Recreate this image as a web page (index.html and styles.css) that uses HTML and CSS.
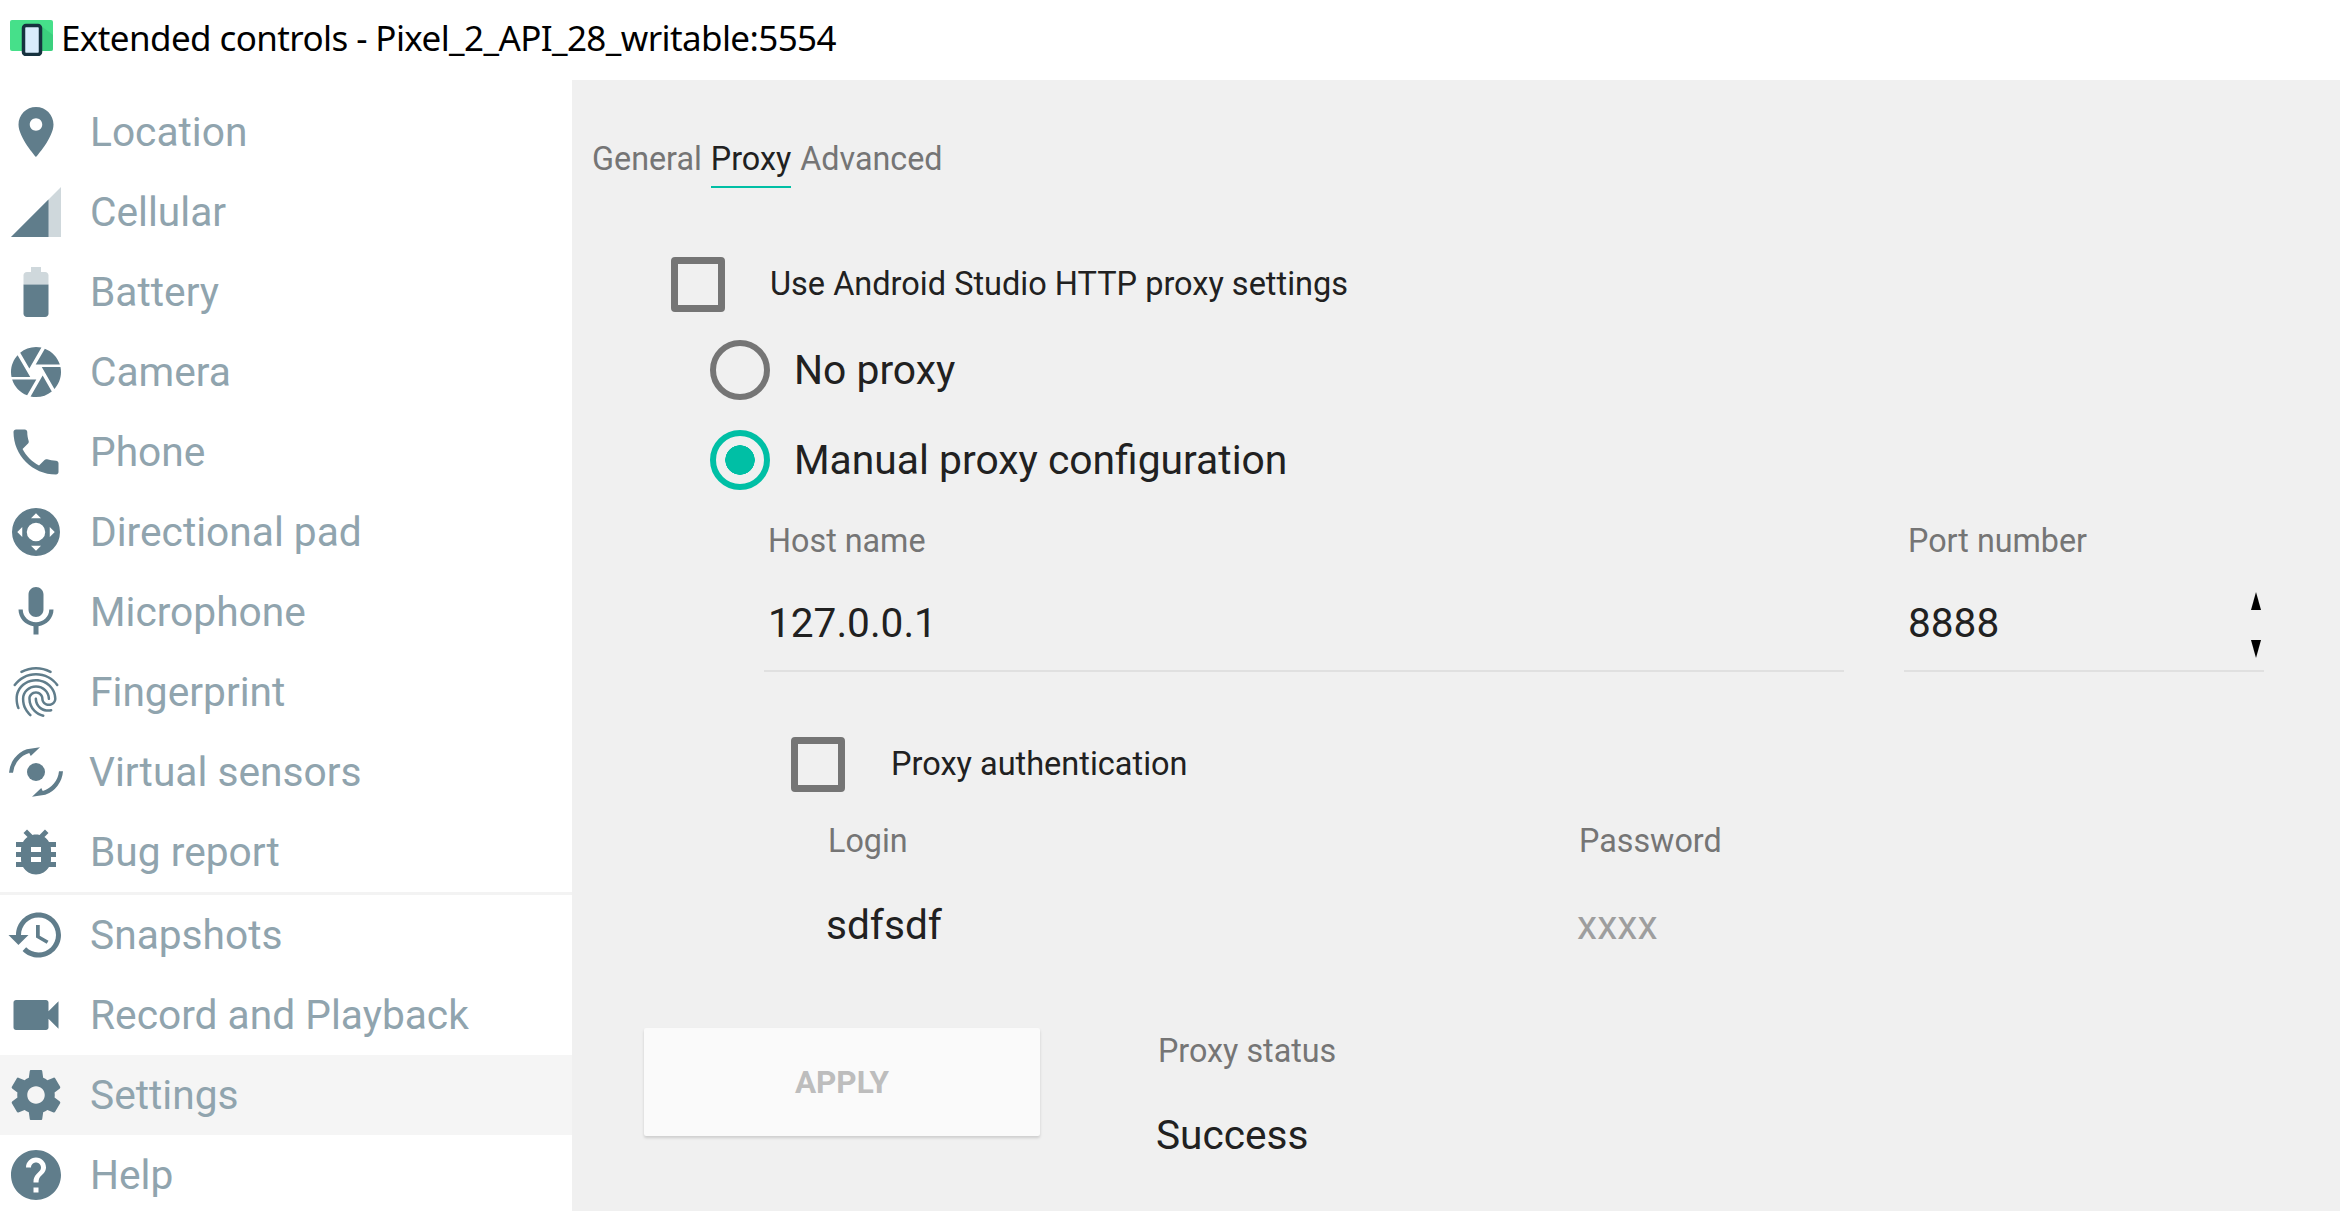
FILE: index.html
```html
<!DOCTYPE html>
<html lang="en">
<head>
    <meta charset="UTF-8">
    <title>Extended controls - Pixel_2_API_28_writable:5554</title>
    <link rel="stylesheet" href="styles.css">
</head>
<body>
    <div class="titlebar">
        <svg class="app-icon" viewBox="0 0 44 36">
            <rect x="0" y="0" width="43" height="31" rx="2" fill="#46e08a"/>
            <path d="M30 5 L43 15 V29 a2 2 0 0 1 -2 2 H30z" fill="#33c274" opacity=".55"/>
            <rect x="13.500" y="5.500" width="17" height="29" rx="2.500" fill="#d9ecfc" stroke="#16323f" stroke-width="3.500"/>
        </svg>
        <span class="title-text">Extended controls - Pixel_2_API_28_writable:5554</span>
    </div>

    <div class="window">
        <div class="sidebar">
            <div class="nav-group">
                <div class="nav-item">
                    <svg class="nav-icon" viewBox="0 0 24 24"><path d="M12 2C8.13 2 5 5.13 5 9c0 5.25 7 13 7 13s7-7.75 7-13c0-3.87-3.13-7-7-7zm0 9.5c-1.38 0-2.5-1.12-2.5-2.5s1.12-2.5 2.5-2.5 2.5 1.12 2.5 2.5-1.12 2.5-2.5 2.5z"/></svg>
                    <span>Location</span>
                </div>
                <div class="nav-item">
                    <svg class="nav-icon" viewBox="0 0 24 24"><path fill-opacity=".3" d="M2 22h20V2z"/><path d="M17 7L2 22h15z"/></svg>
                    <span>Cellular</span>
                </div>
                <div class="nav-item">
                    <svg class="nav-icon" viewBox="0 0 24 24"><path fill-opacity=".3" d="M17 5.33C17 4.6 16.4 4 15.67 4H14V2h-4v2H8.33C7.6 4 7 4.6 7 5.33V9h10V5.33z"/><path d="M7 9v11.67C7 21.4 7.6 22 8.33 22h7.33c.74 0 1.34-.6 1.34-1.33V9H7z"/></svg>
                    <span>Battery</span>
                </div>
                <div class="nav-item">
                    <svg class="nav-icon" viewBox="0 0 24 24"><path d="M9.4 10.5l4.77-8.26C13.47 2.09 12.75 2 12 2c-2.4 0-4.6.85-6.32 2.25l3.66 6.35.06-.1zM21.54 9c-.92-2.92-3.15-5.26-6-6.34L11.88 9h9.66zm.26 1h-7.49l.29.5 4.76 8.25C21 16.97 22 14.61 22 12c0-.69-.07-1.35-.2-2zM8.54 12l-3.9-6.75C3.01 7.03 2 9.39 2 12c0 .69.07 1.35.2 2h7.49l-1.15-2zm-6.08 3c.92 2.92 3.15 5.26 6 6.34L12.12 15H2.46zm11.27 0l-3.9 6.76c.7.15 1.42.24 2.17.24 2.4 0 4.6-.85 6.32-2.25l-3.66-6.35-.93 1.6z"/></svg>
                    <span>Camera</span>
                </div>
                <div class="nav-item">
                    <svg class="nav-icon" viewBox="0 0 24 24"><path d="M6.62 10.79c1.44 2.83 3.76 5.14 6.59 6.59l2.2-2.2c.27-.27.67-.36 1.02-.24 1.12.37 2.33.57 3.57.57.55 0 1 .45 1 1V20c0 .55-.45 1-1 1-9.39 0-17-7.61-17-17 0-.55.45-1 1-1h3.5c.55 0 1 .45 1 1 0 1.25.2 2.45.57 3.57.11.35.03.74-.25 1.02l-2.2 2.2z"/></svg>
                    <span>Phone</span>
                </div>
                <div class="nav-item">
                    <svg class="nav-icon" viewBox="0 0 24 24"><path fill-rule="evenodd" d="M12 2.400a9.600 9.600 0 1 0 0 19.200 9.600 9.600 0 0 0 0-19.200zM12 8.300a3.700 3.700 0 1 1 0 7.400 3.700 3.700 0 0 1 0-7.400zM12 4.500l2 2h-4zM12 19.500l-2-2h4zM4.500 12l2-2v4zM19.500 12l-2 2v-4z"/></svg>
                    <span>Directional pad</span>
                </div>
                <div class="nav-item">
                    <svg class="nav-icon" viewBox="0 0 24 24"><path d="M12 14c1.66 0 2.99-1.34 2.99-3L15 5c0-1.66-1.34-3-3-3S9 3.34 9 5v6c0 1.66 1.34 3 3 3zm5.3-3c0 3-2.54 5.1-5.3 5.1S6.7 14 6.7 11H5c0 3.41 2.72 6.23 6 6.72V21h2v-3.28c3.28-.48 6-3.3 6-6.72h-1.7z"/></svg>
                    <span>Microphone</span>
                </div>
                <div class="nav-item">
                    <svg class="nav-icon" viewBox="0 0 24 24"><path d="M17.81 4.47c-.08 0-.16-.02-.23-.06C15.66 3.42 14 3 12.01 3c-1.98 0-3.86.47-5.57 1.41-.24.13-.54.04-.68-.2-.13-.24-.04-.55.2-.68C7.82 2.52 9.86 2 12.01 2c2.13 0 3.99.47 6.03 1.52.25.13.34.43.21.67-.09.18-.26.28-.44.28zM3.5 9.72c-.1 0-.2-.03-.29-.09-.23-.16-.28-.47-.12-.7.99-1.4 2.25-2.5 3.75-3.27C9.98 4.04 14 4.03 17.15 5.65c1.5.77 2.76 1.86 3.75 3.25.16.22.11.54-.12.7-.23.16-.54.11-.7-.12-.9-1.26-2.04-2.25-3.39-2.94-2.87-1.47-6.54-1.47-9.4.01-1.36.7-2.5 1.7-3.4 2.96-.08.14-.23.21-.39.21zm6.25 12.07c-.13 0-.26-.05-.35-.15-.87-.87-1.34-1.43-2.01-2.64-.69-1.23-1.05-2.73-1.05-4.34 0-2.97 2.54-5.39 5.66-5.39s5.66 2.42 5.66 5.39c0 .28-.22.5-.5.5s-.5-.22-.5-.5c0-2.42-2.09-4.39-4.66-4.39-2.57 0-4.66 1.97-4.66 4.39 0 1.44.32 2.77.93 3.85.64 1.15 1.08 1.64 1.85 2.42.19.2.19.51 0 .71-.11.1-.24.15-.37.15zm7.17-1.85c-1.19 0-2.24-.3-3.1-.89-1.49-1.01-2.38-2.65-2.38-4.39 0-.28.22-.5.5-.5s.5.22.5.5c0 1.41.72 2.74 1.94 3.56.71.48 1.54.71 2.54.71.24 0 .64-.03 1.04-.1.27-.05.53.13.58.41.05.27-.13.53-.41.58-.57.11-1.07.12-1.21.12zM14.91 22c-.04 0-.09-.01-.13-.02-1.59-.44-2.63-1.03-3.72-2.1-1.4-1.39-2.17-3.24-2.17-5.22 0-1.62 1.38-2.94 3.08-2.94 1.7 0 3.08 1.32 3.08 2.94 0 1.07.93 1.94 2.08 1.94s2.08-.87 2.08-1.94c0-3.77-3.25-6.83-7.25-6.83-2.84 0-5.44 1.58-6.61 4.03-.39.81-.59 1.76-.59 2.8 0 .78.07 2.01.67 3.61.1.26-.03.55-.29.64-.26.1-.55-.04-.64-.29-.49-1.31-.73-2.61-.73-3.96 0-1.2.23-2.29.68-3.24 1.33-2.79 4.28-4.6 7.51-4.6 4.55 0 8.25 3.51 8.25 7.83 0 1.62-1.38 2.94-3.08 2.94s-3.08-1.32-3.08-2.94c0-1.07-.93-1.94-2.08-1.94s-2.08.87-2.08 1.94c0 1.71.66 3.31 1.87 4.51.95.94 1.86 1.46 3.27 1.85.27.07.42.35.35.61-.05.23-.26.38-.47.38z"/></svg>
                    <span>Fingerprint</span>
                </div>
                <div class="nav-item">
                    <svg class="nav-icon" viewBox="0 0 24 24">
                        <circle cx="12" cy="12" r="3.600"/>
                        <path id="sensor-arc" d="M1.200 12.300A10.800 10.800 0 0 1 8.300 2.900L13.600 2.100 9.900 5.600 9.300 4.400A9.200 9.200 0 0 0 2.800 12.300z"/>
                        <use href="#sensor-arc" transform="rotate(180 12 12)"/>
                    </svg>
                    <span class="nudge">Virtual sensors</span>
                </div>
                <div class="nav-item">
                    <svg class="nav-icon" viewBox="0 0 24 24"><path d="M20 8h-2.81c-.45-.78-1.07-1.45-1.82-1.96L17 4.41 15.59 3l-2.17 2.17C12.96 5.06 12.49 5 12 5c-.49 0-.96.06-1.41.17L8.41 3 7 4.41l1.62 1.63C7.88 6.55 7.26 7.22 6.81 8H4v2h2.09c-.05.33-.09.66-.09 1v1H4v2h2v1c0 .34.04.67.09 1H4v2h2.81c1.04 1.79 2.97 3 5.19 3s4.15-1.21 5.19-3H20v-2h-2.09c.05-.33.09-.66.09-1v-1h2v-2h-2v-1c0-.34-.04-.67-.09-1H20V8zm-6 8h-4v-2h4v2zm0-4h-4v-2h4v2z"/></svg>
                    <span>Bug report</span>
                </div>
            </div>
            <div class="nav-group nav-group-last">
                <div class="nav-item">
                    <svg class="nav-icon" viewBox="0 0 24 24"><path d="M13 3c-4.97 0-9 4.03-9 9H1l3.89 3.89.07.14L9 12H6c0-3.87 3.13-7 7-7s7 3.13 7 7-3.13 7-7 7c-1.93 0-3.68-.79-4.94-2.06l-1.42 1.42C8.27 19.99 10.51 21 13 21c4.97 0 9-4.03 9-9s-4.03-9-9-9zm-1 5v5l4.28 2.54.72-1.21-3.5-2.08V8H12z"/></svg>
                    <span>Snapshots</span>
                </div>
                <div class="nav-item">
                    <svg class="nav-icon" viewBox="0 0 24 24"><path d="M17 10.5V7c0-.55-.45-1-1-1H4c-.55 0-1 .45-1 1v10c0 .55.45 1 1 1h12c.55 0 1-.45 1-1v-3.500l4 4v-11l-4 4z"/></svg>
                    <span>Record and Playback</span>
                </div>
                <div class="nav-item active">
                    <svg class="nav-icon" viewBox="0 0 24 24"><path d="M19.43 12.98c.04-.32.07-.64.07-.98s-.03-.66-.07-.98l2.11-1.65c.19-.15.24-.42.12-.64l-2-3.46c-.12-.22-.39-.3-.61-.22l-2.49 1c-.52-.4-1.08-.73-1.69-.98l-.38-2.65C14.46 2.18 14.25 2 14 2h-4c-.25 0-.46.18-.49.42l-.38 2.65c-.61.25-1.17.59-1.69.98l-2.49-1c-.23-.09-.49 0-.61.22l-2 3.46c-.13.22-.07.49.12.64l2.11 1.65c-.04.32-.07.65-.07.98s.03.66.07.98l-2.11 1.65c-.19.15-.24.42-.12.64l2 3.46c.12.22.39.3.61.22l2.49-1c.52.4 1.08.73 1.69.98l.38 2.65c.03.24.24.42.49.42h4c.25 0 .46-.18.49-.42l.38-2.65c.61-.25 1.17-.59 1.69-.98l2.49 1c.23.09.49 0 .61-.22l2-3.46c.12-.22.07-.49-.12-.64l-2.11-1.65zM12 15.5c-1.93 0-3.5-1.57-3.5-3.5s1.57-3.5 3.5-3.5 3.5 1.57 3.5 3.5-1.57 3.5-3.5 3.5z"/></svg>
                    <span>Settings</span>
                </div>
                <div class="nav-item">
                    <svg class="nav-icon" viewBox="0 0 24 24"><path d="M12 2C6.48 2 2 6.48 2 12s4.48 10 10 10 10-4.48 10-10S17.52 2 12 2zm1 17h-2v-2h2v2zm2.07-7.750l-.9.92C13.45 12.9 13 13.5 13 15h-2v-.5c0-1.1.45-2.1 1.17-2.830l1.24-1.26c.37-.36.59-.86.59-1.41 0-1.1-.9-2-2-2s-2 .9-2 2H8c0-2.210 1.790-4 4-4s4 1.790 4 4c0 .88-.36 1.680-.93 2.250z"/></svg>
                    <span>Help</span>
                </div>
            </div>
        </div>

        <div class="content">
            <div class="tabs">
                <div class="tab">General</div>
                <div class="tab selected">Proxy</div>
                <div class="tab">Advanced</div>
            </div>

            <div class="check-row studio-row">
                <div class="checkbox"></div>
                <span class="text-small">Use Android Studio HTTP proxy settings</span>
            </div>

            <div class="radio-group">
                <div class="radio-row">
                    <div class="radio"></div>
                    <span class="text-large">No proxy</span>
                </div>
                <div class="radio-row">
                    <div class="radio checked"></div>
                    <span class="text-large">Manual proxy configuration</span>
                </div>
            </div>

            <div class="host-row">
                <div class="field">
                    <div class="field-label">Host name</div>
                    <div class="field-value">127.0.0.1</div>
                </div>
                <div class="field">
                    <div class="field-label">Port number</div>
                    <div class="field-value">8888</div>
                    <div class="spinner">
                        <span class="arrow-up"></span>
                        <span class="arrow-down"></span>
                    </div>
                </div>
            </div>

            <div class="check-row auth-row">
                <div class="checkbox"></div>
                <span class="text-small">Proxy authentication</span>
            </div>

            <div class="login-row">
                <div>
                    <div class="field-label">Login</div>
                    <div class="login-value">sdfsdf</div>
                </div>
                <div>
                    <div class="field-label">Password</div>
                    <div class="login-value password">xxxx</div>
                </div>
            </div>

            <div class="bottom-row">
                <div class="apply-button">APPLY</div>
                <div class="status">
                    <div class="field-label">Proxy status</div>
                    <div class="login-value status-value">Success</div>
                </div>
            </div>
        </div>
    </div>
</body>
</html>
```

FILE: styles.css
```css
/* General Styles */
html, body {
    height: 100%;
}

body {
    margin: 0;
    font-family: Roboto, "Liberation Sans", sans-serif;
    background-color: #ffffff;
    display: flex;
    flex-direction: column;
    overflow: hidden;
}

/* Title bar */
.titlebar {
    height: 80px;
    flex-shrink: 0;
    display: flex;
    align-items: center;
    padding-left: 10px;
    box-sizing: border-box;
}

.app-icon {
    width: 44px;
    height: 36px;
    margin: 0 7px 4px 0;
}

.title-text {
    font-family: "Noto Sans", sans-serif;
    font-size: 35px;
    letter-spacing: -0.6px;
    margin-bottom: 5px;
    color: #000000;
}

.window {
    flex: 1;
    display: flex;
    min-height: 0;
}

/* Sidebar */
.sidebar {
    width: 572px;
    flex-shrink: 0;
    padding-top: 12px;
    box-sizing: border-box;
}

.nav-group {
    border-bottom: 3px solid #f3f3f3;
}

.nav-group-last {
    border-bottom: none;
}

.nav-item {
    height: 80px;
    display: flex;
    align-items: center;
    padding-left: 6px;
    font-size: 40.7px;
    color: #90a4ae;
}

.nav-item.active {
    background-color: #f5f5f5;
}

.nav-icon {
    width: 60px;
    height: 60px;
    margin-right: 24px;
    fill: #607d8b;
    flex-shrink: 0;
}

.nudge {
    margin-left: -1px;
}

/* Content */
.content {
    flex: 1;
    background-color: #f0f0f0;
    padding-top: 58px;
    min-width: 0;
}

.tabs {
    display: flex;
    gap: 9px;
    margin-left: 20px;
}

.tab {
    font-size: 32.3px;
    line-height: 40px;
    padding-top: 1px;
    padding-bottom: 7px;
    border-bottom: 2px solid transparent;
    color: #757575;
}

.tab.selected {
    color: #212121;
    border-bottom-color: #00bfa5;
}

.check-row {
    display: flex;
    align-items: center;
    gap: 46px;
}

.studio-row {
    gap: 45px;
    margin: 69px 0 0 99px;
}

.auth-row {
    margin: 65px 0 0 219px;
}

.checkbox {
    width: 54px;
    height: 55px;
    box-sizing: border-box;
    border: 7px solid #757575;
    border-radius: 4px;
}

.text-small {
    font-size: 32.5px;
    margin-bottom: 2px;
    color: #212121;
}

.text-large {
    font-size: 40.8px;
    color: #212121;
}

.radio-group {
    display: flex;
    flex-direction: column;
    gap: 30px;
    margin: 28px 0 0 138px;
}

.radio-row {
    display: flex;
    align-items: center;
    gap: 24px;
}

.radio {
    width: 60px;
    height: 60px;
    box-sizing: border-box;
    border: 6px solid #757575;
    border-radius: 50%;
}

.radio.checked {
    border-color: #00bfa5;
    background: radial-gradient(circle, #00bfa5 14.500px, transparent 15px);
}

.host-row {
    display: grid;
    grid-template-columns: 1080px 360px;
    gap: 60px;
    margin: 31px 0 0 192px;
}

.field {
    position: relative;
    padding: 0 0 23px 4px;
    border-bottom: 2px solid #e0e0e0;
}

.field-label {
    font-size: 32.3px;
    line-height: 40px;
    color: #757575;
}

.field-value {
    font-size: 40.6px;
    line-height: 48px;
    margin-top: 38px;
    color: #212121;
}

.spinner {
    position: absolute;
    right: 3px;
    top: 71px;
    height: 66px;
    display: flex;
    flex-direction: column;
    justify-content: space-between;
}

.arrow-up {
    border-left: 5px solid transparent;
    border-right: 5px solid transparent;
    border-bottom: 18px solid #000000;
}

.arrow-down {
    border-left: 5px solid transparent;
    border-right: 5px solid transparent;
    border-top: 18px solid #000000;
}

.login-row {
    display: grid;
    grid-template-columns: 751px 1fr;
    margin: 29px 0 0 256px;
}

.login-value {
    font-size: 40.6px;
    line-height: 48px;
    margin: 40px 0 0 -2px;
    color: #212121;
}

.login-value.password {
    color: #9e9e9e;
}

.bottom-row {
    display: flex;
    align-items: flex-start;
    gap: 118px;
    margin: 79px 0 0 72px;
}

.apply-button {
    width: 396px;
    height: 108px;
    flex-shrink: 0;
    display: flex;
    align-items: center;
    justify-content: center;
    background-color: #fafafa;
    border-radius: 2px;
    box-shadow: 0 2px 3px rgba(0, 0, 0, 0.15);
    font-size: 31.5px;
    font-weight: 700;
    color: #bdbdbd;
}

.status {
    padding-top: 3px;
}

.status-value {
    margin-top: 40px;
}
```
